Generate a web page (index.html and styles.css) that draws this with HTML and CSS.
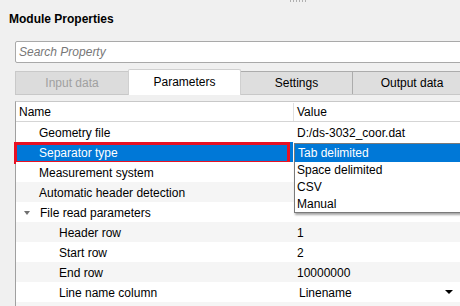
FILE: index.html
```html
<!DOCTYPE html>
<html>
<head>
<meta charset="utf-8">
<link rel="stylesheet" href="styles.css">
</head>
<body>
<div class="grip"></div>
<div class="title">Module Properties</div>
<div class="search"><span class="ph">Search Property</span></div>
<div class="tabs">
  <div class="tab disabled">Input data</div>
  <div class="tab active">Parameters</div>
  <div class="tab">Settings</div>
  <div class="tab last">Output data</div>
</div>
<div class="pane">
  <div class="grid">
    <div class="row head"><div class="c1 hname">Name</div><div class="c2">Value</div></div>
    <div class="row"><div class="c1 l1">Geometry file</div><div class="c2">D:/ds-3032_coor.dat</div></div>
    <div class="row sel"><div class="c1 l1 selname">Separator type</div><div class="c2"></div><div class="mark"></div></div>
    <div class="row"><div class="c1 l1">Measurement system</div><div class="c2"></div></div>
    <div class="row alt"><div class="c1 l1">Automatic header detection</div><div class="c2"></div></div>
    <div class="row"><div class="c1 l0"><span class="tri"></span>File read parameters</div><div class="c2"></div></div>
    <div class="row alt"><div class="c1 l2">Header row</div><div class="c2">1</div></div>
    <div class="row"><div class="c1 l2">Start row</div><div class="c2">2</div></div>
    <div class="row alt"><div class="c1 l2">End row</div><div class="c2">10000000</div></div>
    <div class="row"><div class="c1 l2">Line name column</div><div class="c2 combo">Linename<span class="arrow"></span></div></div>
    <div class="row alt short"><div class="c1"></div><div class="c2"></div></div>
  </div>
  <div class="popup">
    <div class="opt on">Tab delimited</div>
    <div class="opt">Space delimited</div>
    <div class="opt">CSV</div>
    <div class="opt">Manual</div>
  </div>
</div>
</body>
</html>
```

FILE: styles.css
```css
html, body {
  margin: 0;
  padding: 0;
  background: #f0f0f0;
  width: 460px;
  height: 306px;
  overflow: hidden;
  font-family: "Liberation Sans", Arial, sans-serif;
  font-size: 12px;
  color: #000;
  position: relative;
}
.grip {
  position: absolute;
  left: 290px;
  top: 0;
  width: 17px;
  height: 2px;
  background: repeating-linear-gradient(90deg, #b0b0b0 0 1px, transparent 1px 3px);
}
.title {
  padding: 11px 0 0 9px;
  height: 16px;
  line-height: 16px;
  font-weight: bold;
  font-size: 12px;
}
.search {
  margin: 14px -10px 0 15px;
  height: 20px;
  border: 1px solid #a9a9a9;
  border-radius: 2px;
  background: #fff;
  display: flex;
  align-items: center;
  padding-left: 3px;
}
.ph {
  font-style: italic;
  color: #777;
}
.tabs {
  display: flex;
  align-items: flex-end;
  margin: 6px 0 0 15px;
  height: 25px;
  border-bottom: 1px solid #c8c8c8;
}
.tab {
  box-sizing: border-box;
  flex: 0 0 auto;
  width: 113px;
  height: 23px;
  border: 1px solid #acacac;
  border-bottom: none;
  background: #dedede;
  display: flex;
  align-items: center;
  justify-content: center;
  margin-right: -1px;
}
.tab.disabled {
  color: #a0a0a0;
  background: #dcdcdc;
  border-color: #c9c9c9;
  width: 114px;
}
.tab.active {
  height: 26px;
  margin-bottom: -1px;
  background: #fff;
  border-color: #d0d0d0;
  border-radius: 2px 2px 0 0;
  width: 113px;
  position: relative;
  z-index: 1;
  padding-bottom: 2px;
}
.tab.last {
  width: 120px;
}
.pane {
  position: relative;
  padding-top: 6px;
  margin-left: 15px;
}
.grid {
  border-left: 1px solid #a0a0a0;
  border-top: 1px solid #c8c8c8;
  background: #fff;
}
.row {
  display: flex;
  box-sizing: border-box;
  height: 20px;
  line-height: 20px;
  padding-top: 1px;
  overflow: hidden;
  position: relative;
  background: #fff;
}
.row.sel {
  overflow: visible;
  padding-top: 0;
}
.row.sel .c1 {
  padding-top: 1px;
  height: 20px;
  box-sizing: border-box;
}
.row.alt {
  background: #f5f5f5;
}
.row.head {
  background: #fff;
  border-bottom: 1px solid #d5d5d5;
  height: 20px;
  line-height: 19px;
}
.row.short {
  height: 6px;
}
.c1 {
  width: 277px;
  flex: 0 0 auto;
  white-space: nowrap;
  box-sizing: border-box;
}
.c2 {
  flex: 1;
  padding-left: 4px;
  white-space: nowrap;
  position: relative;
}
.head .c2 {
  border-left: 1px solid #e0e0e0;
  padding-left: 3px;
}
.hname { padding-left: 3px; }
.l0 { padding-left: 6px; display: flex; align-items: center; }
.l1 { padding-left: 23px; }
.l2 { padding-left: 43px; }
.tri {
  width: 0;
  height: 0;
  border-left: 3.5px solid transparent;
  border-right: 3.5px solid transparent;
  border-top: 4px solid #707070;
  margin: 0 10px 0 2px;
}
.row.sel .selname {
  background: #0078d7;
  color: #fff;
}
.mark {
  position: absolute;
  left: -2px;
  top: 0;
  width: 276px;
  height: 22px;
  box-sizing: border-box;
  border: 3px solid #e81123;
}
.combo {
  padding-left: 6px;
}
.arrow {
  position: absolute;
  right: 7px;
  top: 7px;
  width: 0;
  height: 0;
  border-left: 4px solid transparent;
  border-right: 4px solid transparent;
  border-top: 4px solid #000;
}
.popup {
  position: absolute;
  left: 279px;
  top: 48px;
  width: 180px;
  height: 70px;
  background: #fff;
  border: 1px solid #7a7a7a;
  box-shadow: 1px 2px 2px rgba(0,0,0,0.35);
  box-sizing: border-box;
}
.opt {
  height: 17px;
  line-height: 17px;
  padding-left: 2px;
}
.opt.on {
  background: #0078d7;
  color: #fff;
  height: 18px;
  line-height: 19px;
  padding-left: 3px;
}
```
